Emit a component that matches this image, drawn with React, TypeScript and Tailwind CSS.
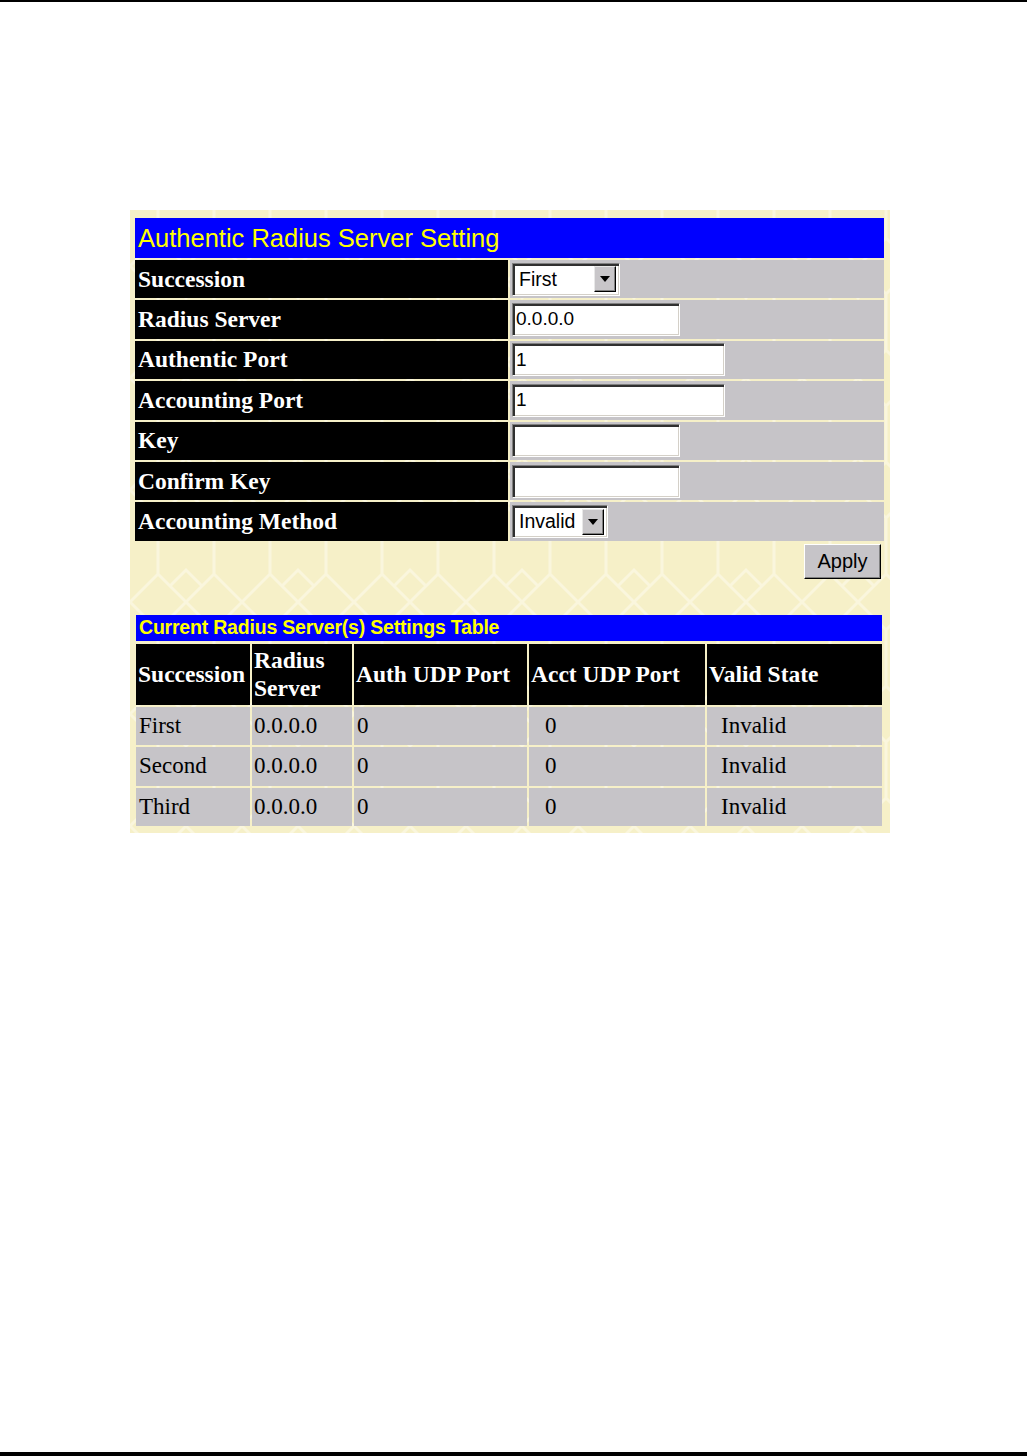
import React from "react";

const serif = "font-['Liberation_Serif','Times_New_Roman',serif]";
const sans = "font-['Liberation_Sans',Arial,sans-serif]";

/* ---------------- 3D inputs ---------------- */
const TextBox = ({ value = "", wide = false }: { value?: string; wide?: boolean }) => (
  <div
    className={`${wide ? "w-[213px]" : "w-[168px]"} h-[33px] bg-white border border-t-[#808080] border-l-[#808080] border-b-white border-r-white shadow-[inset_2px_2px_0_#303030,inset_-1px_-1px_0_#d4d0c8] flex items-center pl-[3px] ${sans} text-[19px] text-black`}
  >
    {value}
  </div>
);

const SelectBox = ({ value, width }: { value: string; width: string }) => (
  <div
    className={`${width} h-[33px] bg-white border border-t-[#808080] border-l-[#808080] border-b-white border-r-white shadow-[inset_2px_2px_0_#303030,inset_-1px_-1px_0_#d4d0c8] flex items-center justify-between pl-[6px] pr-[3px] ${sans} text-[19.5px] text-black`}
  >
    <span>{value}</span>
    <div className="w-[22px] h-[26px] bg-[#c8c6c9] border border-t-[#e8e8e8] border-l-[#e8e8e8] border-b-black border-r-black shadow-[inset_-1px_-1px_0_#808080] flex items-center justify-center">
      <svg width="10" height="6" viewBox="0 0 10 6">
        <path d="M0 0 H10 L5 6 Z" fill="#000" />
      </svg>
    </div>
  </div>
);

/* ---------------- Form rows ---------------- */
const rows: { label: string; field: React.ReactNode }[] = [
  { label: "Succession", field: <SelectBox value="First" width="w-[108px]" /> },
  { label: "Radius Server", field: <TextBox value="0.0.0.0" /> },
  { label: "Authentic Port", field: <TextBox value="1" wide /> },
  { label: "Accounting Port", field: <TextBox value="1" wide /> },
  { label: "Key", field: <TextBox /> },
  { label: "Confirm Key", field: <TextBox /> },
  { label: "Accounting Method", field: <SelectBox value="Invalid" width="w-[96px]" /> },
];

const servers = [
  { succ: "First", ip: "0.0.0.0", auth: "0", acct: "0", state: "Invalid" },
  { succ: "Second", ip: "0.0.0.0", auth: "0", acct: "0", state: "Invalid" },
  { succ: "Third", ip: "0.0.0.0", auth: "0", acct: "0", state: "Invalid" },
];

/* ---------------- Background pattern ---------------- */
const Pattern = () => (
  <svg className="absolute inset-0 w-full h-full pointer-events-none" aria-hidden>
    <defs>
      <pattern id="tile" width="112" height="112" patternUnits="userSpaceOnUse">
        <path
          d="M0 56 L28 28 L56 56 L84 28 L112 56 M28 28 L28 0 M84 28 L84 0 M0 56 L28 84 L56 56 L84 84 L112 56 M28 84 L28 112 M84 84 L84 112 M40 40 L56 24 L72 40 M40 72 L56 88 L72 72"
          fill="none"
          stroke="#faf6dd"
          strokeWidth="3"
        />
      </pattern>
    </defs>
    <rect width="100%" height="100%" fill="url(#tile)" />
  </svg>
);

export default function App() {
  return (
    <div className="w-[1027px] h-[1456px] bg-white flex flex-col">
      <div className="h-[2px] bg-black" />

      {/* ── Panel ── */}
      <div className="relative mt-[208px] ml-[130px] w-[760px] h-[623px] bg-[#f6f0c8] pl-[5px] pt-[8px] overflow-hidden">
        <Pattern />

        <div className="relative flex flex-col">
          {/* Setting table */}
          <div className="w-[749px] flex flex-col gap-[2px]">
            <div className={`h-[40px] bg-[#0000ff] text-[#ffff00] ${sans} text-[25.5px] flex items-center pl-[3px]`}>
              Authentic Radius Server Setting
            </div>
            {rows.map((r) => (
              <div key={r.label} className="h-[38.4px] grid grid-cols-[373px_374px] gap-[2px]">
                <div className={`bg-black text-white ${serif} font-bold text-[23.5px] flex items-center pl-[3px]`}>
                  {r.label}
                </div>
                <div className="bg-[#c6c4c8] flex items-center pl-[2px]">{r.field}</div>
              </div>
            ))}
          </div>

          {/* Apply */}
          <div className="w-[749px] flex justify-end pr-[3px] mt-[3px]">
            <button className={`w-[77px] h-[35px] bg-[#c6c4c8] border border-t-white border-l-white border-b-black border-r-black shadow-[inset_-1px_-1px_0_#808080] ${sans} text-[20px] text-black flex items-center justify-center`}>
              Apply
            </button>
          </div>

          {/* Current table */}
          <div className="w-[746px] ml-px mt-[36px] flex flex-col">
            <div className={`h-[26px] bg-[#0000ff] text-[#ffff00] ${sans} font-bold text-[19.5px] flex items-center pl-[3px] tracking-[-0.2px]`}>
              Current Radius Server(s) Settings Table
            </div>
            <div className="mt-[3px] flex flex-col gap-[2px]">
              <div className={`h-[61px] grid grid-cols-[114px_100px_173px_176px_175px] gap-[2px] ${serif} font-bold text-[23.5px] text-white`}>
                <div className="bg-black flex items-center pl-[2px]">Succession</div>
                <div className="bg-black flex items-center pl-[2px] leading-[28px]">
                  Radius
                  <br />
                  Server
                </div>
                <div className="bg-black flex items-center pl-[2px]">Auth UDP Port</div>
                <div className="bg-black flex items-center pl-[2px]">Acct UDP Port</div>
                <div className="bg-black flex items-center pl-[2px]">Valid State</div>
              </div>
              {servers.map((s) => (
                <div
                  key={s.succ}
                  className={`h-[38.5px] grid grid-cols-[114px_100px_173px_176px_175px] gap-[2px] ${serif} text-[23px] text-black`}
                >
                  <div className="bg-[#c6c4c8] flex items-center pl-[3px]">{s.succ}</div>
                  <div className="bg-[#c6c4c8] flex items-center pl-[2px]">{s.ip}</div>
                  <div className="bg-[#c6c4c8] flex items-center pl-[3px]">{s.auth}</div>
                  <div className="bg-[#c6c4c8] flex items-center pl-[16px]">{s.acct}</div>
                  <div className="bg-[#c6c4c8] flex items-center pl-[14px]">{s.state}</div>
                </div>
              ))}
            </div>
          </div>
        </div>
      </div>

      <div className="mt-auto h-[4px] bg-black" />
    </div>
  );
}
